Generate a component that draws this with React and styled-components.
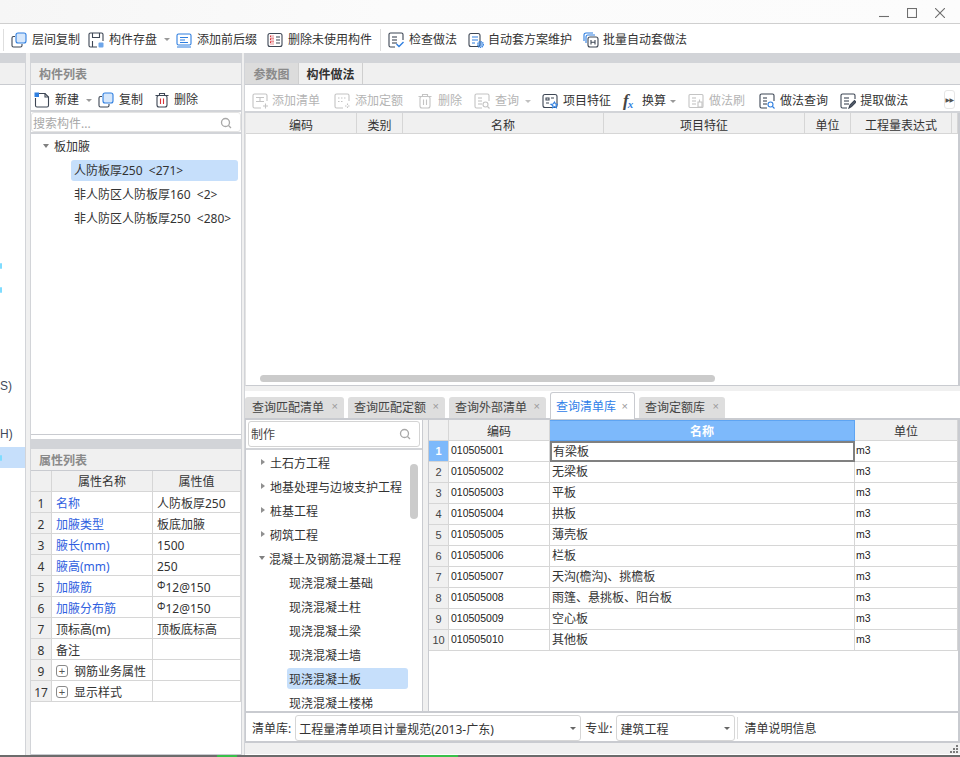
import React from "react";
import styled, { createGlobalStyle } from "styled-components";

const Global = createGlobalStyle`
  html, body { margin: 0; padding: 0; background: #fff; }
  * { box-sizing: border-box; }
  body { font-family: "Noto Sans", "Noto Sans CJK SC", sans-serif; font-size: 12px; color: #333; }
`;

const FONT_LATIN = `"Liberation Sans", "Noto Sans CJK SC", sans-serif`;

const Page = styled.div`
  width: 960px; height: 757px; display: flex; flex-direction: column; overflow: hidden; background: #fff;
`;
const TitleBar = styled.div`
  height: 24px; flex: none; display: flex; justify-content: flex-end; align-items: center; gap: 18px;
  padding: 3px 15px 0 0; background: linear-gradient(90deg, #f6f6f6, #fbfbfb 40%, #fcfcfc);
  border-bottom: 1px solid #cfcfcf;
`;
const WinIcon = styled.svg`
  width: 10px; height: 10px; fill: none; stroke: #6e6e6e; stroke-width: 1.1;
`;
const MainBar = styled.div`
  height: 29px; flex: none; display: flex; align-items: center; padding: 2px 0 0 3px; background: #fff;
`;
const Sep = styled.span`
  width: 1px; height: 22px; background: #dedede; flex: none;
  margin: ${(p) => p.$m || "0"};
`;
const Tool = styled.span`
  display: inline-flex; align-items: center; gap: ${(p) => p.$gap ?? 5}px; flex: none;
  margin-left: ${(p) => p.$ml ?? 0}px; white-space: nowrap; line-height: 16px;
  color: ${(p) => (p.$off ? "#b4b4b4" : "#333")};
`;
const Caret = styled.i`
  width: 0; height: 0; flex: none; display: inline-block; margin-left: ${(p) => p.$ml ?? 2}px;
  border-left: 3px solid transparent; border-right: 3px solid transparent;
  border-top: 3px solid ${(p) => p.$c || "#999"};
`;
const Ic = styled.svg`
  width: 16px; height: 16px; flex: none; fill: none; stroke-width: 1.1;
  stroke: ${(p) => (p.$off ? "#c4c4c4" : "#3d4654")};
`;

const Workspace = styled.div`flex: 1; min-height: 0; display: flex; background: #fff;`;
const Column = styled.div`
  width: ${(p) => (p.$w ? `${p.$w}px` : "auto")}; flex: ${(p) => (p.$w ? "none" : "1")};
  min-width: 0; display: flex; flex-direction: column;
`;
const MiddleColumn = styled(Column)`border-bottom: 1px solid #c9cbd0;`;
const Splitter = styled.div`
  width: ${(p) => p.$w}px; flex: none; background: #f0f0f0;
  border-left: 1px solid #d2d4d8; border-right: 1px solid #d2d4d8;
`;
const Band = styled.div`height: 10px; flex: none; background: #d2d4d8;`;
const PanelHead = styled.div`
  height: 22px; flex: none; display: flex; align-items: center; padding-left: 8px;
  background: #f0f0f0; color: #8a8a8a; font-weight: 700; border-bottom: 1px solid #c9cbd0;
`;

const LeftList = styled.div`flex: 1; min-height: 0; display: flex; flex-direction: column; padding-top: 1px; overflow: hidden;`;
const LeftRow = styled.div`
  height: 24px; flex: none; display: flex; align-items: center; justify-content: flex-start;
  color: #3f4a5a; font-family: ${FONT_LATIN}; font-size: 12px; white-space: nowrap;
`;
const LeftSelected = styled(LeftRow)`
  height: 21px; margin: 1px 0 2px; background: #c6dffb;
`;
const Tick = styled.span`width: 2px; height: 6px; background: #7fdcff; border-radius: 1px;`;

const MiddleTop = styled.div`
  flex: none; height: 372px; display: flex; flex-direction: column; border-bottom: 1px solid #c9cbd0;
`;
const SmallBar = styled.div`
  height: 27px; flex: none; display: flex; align-items: center; padding: 5px 0 0 3px;
  border-bottom: 2px solid #d2d4d8;
`;
const SearchBox = styled.div`
  height: 20px; flex: none; display: flex; align-items: center; justify-content: space-between;
  padding: 1px 6px 0 1px; color: #a8a8a8; border: 1px solid #e4e4e4; border-radius: 3px;
  ${(p) => p.$tall && "height: 26px; margin: 1px 2px 0 2px; padding: 0 6px 0 2px; color: #444; border-color: #d4d4d4;"}
`;
const TreeBody = styled.div`
  flex: 1; min-height: 0; border-top: 2px solid #d2d4d8; display: flex; flex-direction: column;
`;
const TreeRow = styled.div`
  height: 24px; flex: none; display: flex; align-items: center; white-space: nowrap; gap: 3px;
  padding-left: ${(p) => p.$pad}px; color: #333;
`;
const TreeText = styled.span`
  display: flex; align-items: center; height: 21px; padding-left: ${(p) => p.$inset ?? 3}px; flex: none; border-radius: 3px;
  padding-top: ${(p) => (p.$drop ? 2 : 0)}px;
  width: ${(p) => (p.$w ? `${p.$w}px` : "auto")};
  background: ${(p) => (p.$sel ? "#c6dffb" : "transparent")};
  margin-left: ${(p) => p.$ml ?? 0}px;
`;
const ArrowDown = styled.i`
  width: 0; height: 0; flex: none; border-left: 3.5px solid transparent; border-right: 3.5px solid transparent;
  border-top: 4px solid #808080;
`;
const ArrowRight = styled.i`
  width: 0; height: 0; flex: none; margin-left: 2px; border-top: 3.5px solid transparent; border-bottom: 3.5px solid transparent;
  border-left: 4px solid #909090;
`;

const GapBand = styled.div`height: 4px; flex: none; background: #fff;`;
const Row = styled.div`display: flex; flex: none; height: ${(p) => p.$h ?? 21}px;`;
const Cell = styled.div`
  width: ${(p) => (p.$w ? `${p.$w}px` : "auto")}; flex: ${(p) => (p.$w ? "none" : "1")};
  min-width: 0; display: flex; align-items: center; white-space: nowrap; overflow: hidden;
  justify-content: ${(p) => (p.$center ? "center" : "flex-start")};
  padding-left: ${(p) => (p.$center ? 0 : p.$pad ?? 4)}px; gap: 6px;
  border-right: 1px solid #d6d6d6; border-bottom: 1px solid #d6d6d6;
  color: ${(p) => (p.$blue ? "#2f5fe0" : "#333")};
  background: ${(p) => (p.$head ? "#f0f0f0" : "#fff")};
`;
const PropRow = styled(Row)`& > div { padding-top: 2px; }`;
const TopHeadRow = styled(Row)`& > div { padding-top: 3px; }`;
const Rebar = styled.span`font-size: 10px; position: relative; top: -2px; margin-right: -6px;`;
const Plus = styled.span`
  width: 12px; height: 12px; flex: none; border: 1px solid #8a8a8a; border-radius: 3px;
  display: flex; align-items: center; justify-content: center; font-size: 11px; line-height: 1; color: #555;
  font-family: ${FONT_LATIN};
`;

const TabStrip = styled.div`
  height: 22px; flex: none; display: flex; background: #f0f0f0; border-bottom: 1px solid #c9cbd0;
`;
const TopTab = styled.div`
  width: ${(p) => p.$w}px; display: flex; align-items: center; justify-content: center; flex: none;
  background: ${(p) => (p.$on ? "#f0f0f0" : "#dcdcdc")}; font-weight: 700;
  color: ${(p) => (p.$on ? "#333" : "#8a8a8a")}; border-right: 1px solid #cfcfcf;
`;
const ActionBar = styled.div`
  height: 28px; flex: none; display: flex; align-items: center; padding: 6px 0 0 7px; position: relative;
  border-bottom: 2px solid #d2d4d8;
`;
const MoreBtn = styled.span`
  position: absolute; right: 5px; top: 5px; width: 11px; height: 19px; display: flex; align-items: center; justify-content: center;
  border: 1px solid #e6e6e6; border-radius: 3px; font-size: 6px; letter-spacing: -.5px; color: #555; font-family: "DejaVu Sans", sans-serif;
`;
const UpperGrid = styled.div`
  height: 273px; flex: none; position: relative; display: flex; flex-direction: column;
  border-bottom: 1px solid #c9cbd0; border-right: 2px solid #c9cbd0; border-left: 1px solid #e4e4e4;
`;
const ScrollThumbH = styled.span`
  position: absolute; left: 14px; top: 262px; width: 455px; height: 7px; border-radius: 4px; background: #cbcbcb;
`;
const ScrollThumbV = styled.span`
  position: absolute; right: 4px; top: 44px; width: 8px; height: 55px; border-radius: 4px; background: #cbcbcb;
`;
const LowerTabs = styled.div`
  height: 32px; flex: none; display: flex; align-items: flex-end; gap: 4px; background: linear-gradient(#f0f0f0 5px, #fff 5px);
`;
const QueryTab = styled.div`
  width: ${(p) => p.$w}px; height: ${(p) => (p.$on ? 27 : 21)}px; flex: none; display: flex; align-items: center;
  justify-content: space-between; padding: 0 6px ${(p) => (p.$on ? 0 : 2)}px ${(p) => (p.$on ? 5 : 6)}px; border-radius: 3px 3px 0 0;
  background: ${(p) => (p.$on ? "#fff" : "#dedede")}; color: ${(p) => (p.$on ? "#2f80e8" : "#444")};
  border: ${(p) => (p.$on ? "1px solid #c9cbd0" : "none")}; border-bottom: none;
  margin-bottom: ${(p) => (p.$on ? -1 : 0)}px; position: relative;
  &:first-child { padding-left: 7px; }
`;
const Close = styled.span`color: #9a9a9a; font-size: 11px; line-height: 1; font-family: ${FONT_LATIN};`;
const LowerBody = styled.div`
  height: 295px; flex: none; display: flex; background: #fff;
  border-top: 2px solid #c9cbd0; border-bottom: 2px solid #c9cbd0; border-right: 2px solid #c9cbd0;
`;
const QueryTree = styled.div`
  width: 178px; flex: none; position: relative; display: flex; flex-direction: column; overflow: hidden;
  border-left: 1px solid #c9cbd0; border-right: 1px solid #c9cbd0;
`;
const QuerySplit = styled.div`width: 6px; flex: none; background: #f0f0f0; border-right: 1px solid #c9cbd0;`;
const QueryBody = styled.div`
  flex: 1; min-height: 0; overflow: hidden; margin-top: 1px; border-top: 2px solid #d2d4d8;
  display: flex; flex-direction: column;
`;
const DataGrid = styled.div`flex: 1; min-width: 0; display: flex; flex-direction: column; font-family: ${FONT_LATIN};`;
const CodeCell = styled(Cell)`font-size: 10.5px; padding: 0 0 2px ${(p) => p.$pad ?? 2}px; color: #222;`;
const NameCell = styled(Cell)`
  font-family: "Noto Sans", "Noto Sans CJK SC", sans-serif; font-size: 12px; padding: 0 0 3px 2px; color: #333;
  ${(p) => p.$focus && "border: 2px solid #808080; padding: 0 0 1px 1px;"}
`;
const HeadCell = styled(Cell)`
  font-family: "Noto Sans CJK SC", sans-serif; font-size: 12px;
  ${(p) => p.$on && "background: #7db9fb; color: #fff; font-weight: 700; border: 1px solid #5ea4f2; border-width: 1px 1px 1px 0;"}
`;
const NumCell = styled(Cell)`
  background: ${(p) => (p.$on ? "#7db9fb" : "#f0f0f0")}; color: ${(p) => (p.$on ? "#fff" : "#444")};
  font-weight: ${(p) => (p.$on ? 700 : 400)}; font-size: 11px;
`;
const FootBar = styled.div`
  height: 30px; flex: none; display: flex; align-items: center; padding: 2px 0 0 6px; background: #fff;
  border-left: 1px solid #c9cbd0; border-right: 2px solid #c9cbd0;
  border-bottom: 2px solid #c9cbd0;
`;
const Select = styled.div`
  width: ${(p) => p.$w}px; height: 26px; flex: none; display: flex; align-items: center; justify-content: space-between;
  padding: 1px 4px 0 3px; margin: 0 4px; border: 1px solid #d6d6d6; border-radius: 3px; white-space: nowrap; overflow: hidden;
`;
const StatusStrip = styled.div`
  height: 11px; flex: none; position: relative; background: #f0f0f0;
`;
const Grip = styled.svg`position: absolute; right: 1px; top: 1px; width: 10px; height: 10px; fill: #7c7c7c;`;
const BottomEdge = styled.div`
  height: 2px; flex: none; background: linear-gradient(90deg, #6c6c6c 0 217px, #39c04a 217px 237px, #6c6c6c 237px 420px, #39c04a 420px 458px, #6c6c6c 458px);
`;

/* ---- icons ---- */
const B = "#2f7fe0";
const Icon = ({ kind, off }) => {
  const accent = off ? "#c4c4c4" : B;
  const red = "#d8333a";
  const lines = (x, ys, w) => ys.map((y) => <path key={y} d={`M${x} ${y}h${w}`} />);
  const body = {
    copy: (<><rect x="5" y="1" width="10" height="10" rx="2" fill="#d6e7fb" stroke={accent} /><path d="M4 4.500H2.500a1.500 1.500 0 0 0-1.500 1.500v7.500A1.500 1.500 0 0 0 2.500 15h7a1.500 1.500 0 0 0 1.500-1.500V12" /></>),
    save: (<><path d="M9 15H2.500A1.500 1.500 0 0 1 1 13.500v-11A1.500 1.500 0 0 1 2.500 1h11A1.500 1.500 0 0 1 15 2.500V9" /><path d="M4.500 1v4.500h7V1M4.500 15V9" /><rect x="10.500" y="10.500" width="5" height="5" rx="1" fill={B} fillOpacity=".7" stroke="none" /></>),
    prefix: (<g stroke={B}><rect x="1" y="2" width="14" height="11" rx="1.500" /><path d="M4 5.500h8M4 8h5M4 10.500h8M1 15h14" /></g>),
    remove: (<><rect x="1" y="1.500" width="14" height="13" rx="2" /><path d="M9 5h4M9 8h4M9 11h4" /><path d="M3.500 4h2.500v2H3.500zM3.500 7h2.500v2H3.500zM3.500 10h2.500v2H3.500z" stroke={red} strokeDasharray="1 1" /></>),
    check: (<><path d="M7 15H2.500A1.500 1.500 0 0 1 1 13.500v-11A1.500 1.500 0 0 1 2.500 1h11A1.500 1.500 0 0 1 15 2.500V8" />{lines(4, [5, 8, 11], 5)}<path d="M8.500 12l2.500 2.500 4.500-4.500" stroke={B} strokeWidth="1.400" /></>),
    auto: (<><rect x="1" y="1.500" width="11" height="13" rx="2" /><path d="M4 5h6M4 8h6M4 11h3" stroke={B} /><circle cx="12.500" cy="12.500" r="3" fill={B} fillOpacity=".55" stroke={B} strokeDasharray="1 1" /></>),
    batch: (<><path d="M1 9V3a2 2 0 0 1 2-2h7" stroke={B} /><path d="M3 11V5a2 2 0 0 1 2-2h7" stroke={B} /><rect x="5" y="5" width="10" height="10" rx="2" /><path d="M8 8v4.500M12 8v4.500M8 10.200h4" /></>),
    create: (<><path d="M5 1.500h6l3.500 3.500v8.500a1.500 1.500 0 0 1-1.500 1.500H3a1.500 1.500 0 0 1-1.500-1.500V6" /><path d="M11 1.500V5h3.500" /><rect x="0.500" y="0.500" width="4.500" height="4.500" fill={B} stroke="none" /></>),
    trash: (<><path d="M1.500 3.500h13M5.500 3.500V1.500h5v2" /><rect x="3" y="3.500" width="10" height="11.500" rx="2" /><path d="M6.500 6.500v5.500M9.500 6.500v5.500" stroke={off ? "#c4c4c4" : red} /></>),
    addList: (<><path d="M9 15H2.500A1.500 1.500 0 0 1 1 13.500v-11A1.500 1.500 0 0 1 2.500 1h11A1.500 1.500 0 0 1 15 2.500V8" /><path d="M4 4.500h8M8 4.500v4M4 8.500h8M11 13h5M13.500 10.500v5" /></>),
    addQuota: (<><path d="M9 15H2.500A1.500 1.500 0 0 1 1 13.500v-11A1.500 1.500 0 0 1 2.500 1h11A1.500 1.500 0 0 1 15 2.500V8" /><path d="M4 5h8M4 8.500h5M11 13h5M13.500 10.500v5" strokeDasharray="1.500 1.500" /></>),
    query: (<><path d="M8 15H2.500A1.500 1.500 0 0 1 1 13.500v-11A1.500 1.500 0 0 1 2.500 1h11A1.500 1.500 0 0 1 15 2.500V8" />{lines(4, [5, 8, 11], 4)}<circle cx="11.500" cy="11.500" r="2.500" stroke={accent} /><path d="M13.500 13.500l2 2" stroke={accent} /></>),
    feature: (<><rect x="1" y="1.500" width="14" height="13" rx="2" /><path d="M4 5h3v2H4zM4 10h3M9 5h3" /><path d="M12.500 9l1 2 2 .300-1.500 1.400.400 2-1.900-1-1.900 1 .400-2L9 11.300l2-.300z" fill="#fff" stroke={B} /></>),
    brush: (<><rect x="1" y="1.500" width="14" height="13" rx="1" />{lines(4, [5, 8, 11], 4)}<path d="M10 9h4v5h-4zM11.500 9V6.500" /></>),
    extract: (<><path d="M7 15H2.500A1.500 1.500 0 0 1 1 13.500v-11A1.500 1.500 0 0 1 2.500 1h11A1.500 1.500 0 0 1 15 2.500V6" />{lines(4, [5, 8, 11], 5)}<path d="M9 15l1-3 4.500-4.500 1.500 1.500L11.500 13.500z" fill="#5b6472" /></>),
    search: (<g stroke="#a8a8a8" strokeWidth="1.300"><circle cx="7.500" cy="7.500" r="4" /><path d="M10.500 10.500l2.500 2.500" /></g>),
  }[kind];
  return <Ic viewBox="0 0 16 16" $off={off}>{body}</Ic>;
};

const FxIcon = styled.span`
  width: 16px; flex: none; font-family: "Liberation Serif", serif; font-style: italic; font-weight: 700; font-size: 17px;
  color: #444; line-height: 16px; letter-spacing: -1px;
  & > sub { color: ${B}; font-size: 11px; vertical-align: -2px; line-height: 0; }
`;

const T = ({ kind, off, ml, gap, children, caret, caretMl }) => (
  <Tool $ml={ml} $off={off} $gap={gap}>
    <Icon kind={kind} off={off} />
    <span>{children}</span>
    {caret && <Caret $ml={caretMl} $c={off ? "#c0c0c0" : "#999"} />}
  </Tool>
);

const props = [
  ["1", "名称", "人防板厚250", true],
  ["2", "加腋类型", "板底加腋", true],
  ["3", "腋长(mm)", "1500", true],
  ["4", "腋高(mm)", "250", true],
  ["5", "加腋筋", "12@150", true, true],
  ["6", "加腋分布筋", "12@150", true, true],
  ["7", "顶标高(m)", "顶板底标高", false],
  ["8", "备注", "", false],
];
const topCols = [["编码", 111], ["类别", 46], ["名称", 201], ["项目特征", 201], ["单位", 46], ["工程量表达式", 101], ["", 0]];
const tree = ["土石方工程", "地基处理与边坡支护工程", "桩基工程", "砌筑工程"];
const subTree = ["现浇混凝土基础", "现浇混凝土柱", "现浇混凝土梁", "现浇混凝土墙", "现浇混凝土板", "现浇混凝土楼梯"];
const items = ["有梁板", "无梁板", "平板", "拱板", "薄壳板", "栏板", "天沟(檐沟)、挑檐板", "雨篷、悬挑板、阳台板", "空心板", "其他板"];
const tabs = [["查询匹配清单", 99], ["查询匹配定额", 97], ["查询外部清单", 97], ["查询清单库", 85, true], ["查询定额库", 86]];
const leftRows = { 7: "tick", 8: "tick", 12: "S)", 14: "H)" };

export default function App() {
  return (
    <Page>
      <Global />
      <TitleBar>
        <WinIcon viewBox="0 0 10 10"><path d="M0 8.500h10" /></WinIcon>
        <WinIcon viewBox="0 0 10 10"><rect x=".5" y=".5" width="9" height="9" /></WinIcon>
        <WinIcon viewBox="0 0 10 10"><path d="M0 0l10 10M10 0L0 10" /></WinIcon>
      </TitleBar>
      <MainBar>
        <Sep />
        <T kind="copy" ml={7}>层间复制</T>
        <T kind="save" ml={8} caret caretMl={2}>构件存盘</T>
        <T kind="prefix" ml={6}>添加前后缀</T>
        <T kind="remove" ml={10}>删除未使用构件</T>
        <Sep $m="0 7px 0 8px" />
        <T kind="check">检查做法</T>
        <T kind="auto" ml={11} gap={4}>自动套方案维护</T>
        <T kind="batch" ml={11} gap={4}>批量自动套做法</T>
      </MainBar>
      <Workspace>
        <Column $w={25}>
          <Band />
          <PanelHead />
          <LeftList>
            {Array.from({ length: 16 }, (_, i) =>
              i === 15 ? (
                <LeftSelected key={i}><Tick /></LeftSelected>
              ) : (
                <LeftRow key={i}>
                  {leftRows[i] === "tick" ? <Tick /> : leftRows[i] || ""}
                </LeftRow>
              )
            )}
          </LeftList>
        </Column>
        <Splitter $w={6} />
        <MiddleColumn $w={210}>
          <Band />
          <MiddleTop>
            <PanelHead>构件列表</PanelHead>
            <SmallBar>
              <T kind="create" caret caretMl={2}>新建</T>
              <T kind="copy" ml={6}>复制</T>
              <T kind="trash" ml={11} gap={4}>删除</T>
            </SmallBar>
            <SearchBox>搜索构件...<Icon kind="search" /></SearchBox>
            <TreeBody>
              <TreeRow $pad={12}><ArrowDown /><TreeText $ml={-1}>板加腋</TreeText></TreeRow>
              <TreeRow $pad={40}><TreeText $sel $w={167}>人防板厚250 &nbsp;&lt;271&gt;</TreeText></TreeRow>
              <TreeRow $pad={40}><TreeText>非人防区人防板厚160 &nbsp;&lt;2&gt;</TreeText></TreeRow>
              <TreeRow $pad={40}><TreeText>非人防区人防板厚250 &nbsp;&lt;280&gt;</TreeText></TreeRow>
            </TreeBody>
          </MiddleTop>
          <GapBand />
          <Band />
          <PanelHead>属性列表</PanelHead>
          <Row>
            <Cell $head $w={21} />
            <Cell $head $center $w={101}>属性名称</Cell>
            <Cell $head $center>属性值</Cell>
          </Row>
          {props.map(([n, name, val, blue, rebar]) => (
            <PropRow key={n}>
              <Cell $head $center $w={21}>{n}</Cell>
              <Cell $blue={blue} $w={101}>{name}</Cell>
              <Cell>{rebar && <Rebar>Φ</Rebar>}{val}</Cell>
            </PropRow>
          ))}
          <PropRow>
            <Cell $head $center $w={21}>9</Cell>
            <Cell $w={101}><Plus>+</Plus>钢筋业务属性</Cell>
            <Cell />
          </PropRow>
          <PropRow>
            <Cell $head $center $w={21}>17</Cell>
            <Cell $w={101}><Plus>+</Plus>显示样式</Cell>
            <Cell />
          </PropRow>
        </MiddleColumn>
        <Splitter $w={4} />
        <Column>
          <Band />
          <TabStrip>
            <TopTab $w={54}>参数图</TopTab>
            <TopTab $w={64} $on>构件做法</TopTab>
          </TabStrip>
          <ActionBar>
            <T kind="addList" off gap={4}>添加清单</T>
            <T kind="addQuota" off ml={14} gap={5}>添加定额</T>
            <T kind="trash" off ml={14}>删除</T>
            <T kind="query" off ml={12} caret caretMl={1}>查询</T>
            <T kind="feature" ml={11}>项目特征</T>
            <Tool $ml={12} $gap={3}><FxIcon>f<sub>x</sub></FxIcon><span>换算</span><Caret $ml={1} /></Tool>
            <T kind="brush" off ml={12}>做法刷</T>
            <T kind="query" ml={14}>做法查询</T>
            <T kind="extract" ml={12} gap={4}>提取做法</T>
            <MoreBtn>▶▶</MoreBtn>
          </ActionBar>
          <UpperGrid>
            <TopHeadRow>
              {topCols.map(([t, w], i) => <Cell key={i} $head $center $w={w}>{t}</Cell>)}
            </TopHeadRow>
            <ScrollThumbH />
          </UpperGrid>
          <LowerTabs>
            {tabs.map(([t, w, on]) => (
              <QueryTab key={t} $w={w} $on={on}>{t}<Close>×</Close></QueryTab>
            ))}
          </LowerTabs>
          <LowerBody>
            <QueryTree>
              <SearchBox $tall>制作<Icon kind="search" /></SearchBox>
              <QueryBody>
                {tree.map((t) => (
                  <TreeRow key={t} $pad={13}><ArrowRight /><TreeText $drop $inset={2}>{t}</TreeText></TreeRow>
                ))}
                <TreeRow $pad={13}><ArrowDown /><TreeText $drop $inset={1}>混凝土及钢筋混凝土工程</TreeText></TreeRow>
                {subTree.map((t, i) => (
                  <TreeRow key={t} $pad={41}><TreeText $drop $inset={2} $sel={i === 4} $w={121}>{t}</TreeText></TreeRow>
                ))}
              </QueryBody>
              <ScrollThumbV />
            </QueryTree>
            <QuerySplit />
            <DataGrid>
              <Row>
                <HeadCell $head $w={20} />
                <HeadCell $head $center $w={101}>编码</HeadCell>
                <HeadCell $head $center $on $w={305}>名称</HeadCell>
                <HeadCell $head $center>单位</HeadCell>
              </Row>
              {items.map((t, i) => (
                <Row key={t}>
                  <NumCell $center $on={i === 0} $w={20}>{i + 1}</NumCell>
                  <CodeCell $w={101}>{`0105050${String(i + 1).padStart(2, "0")}`}</CodeCell>
                  <NameCell $w={305} $focus={i === 0}>{t}</NameCell>
                  <CodeCell $pad={1}>m3</CodeCell>
                </Row>
              ))}
            </DataGrid>
          </LowerBody>
          <FootBar>
            清单库:
            <Select $w={286}>工程量清单项目计量规范(2013-广东)<Caret $c="#666" /></Select>
            专业:
            <Select $w={119}>建筑工程<Caret $c="#666" /></Select>
            <Sep $m="0 6px 0 -2px" />
            清单说明信息
          </FootBar>
          <StatusStrip>
            <Grip viewBox="0 0 10 10">
              <rect x="7" y="1" width="2" height="2" /><rect x="4" y="4" width="2" height="2" /><rect x="7" y="4" width="2" height="2" />
              <rect x="1" y="7" width="2" height="2" /><rect x="4" y="7" width="2" height="2" /><rect x="7" y="7" width="2" height="2" />
            </Grip>
          </StatusStrip>
        </Column>
      </Workspace>
      <BottomEdge />
    </Page>
  );
}
